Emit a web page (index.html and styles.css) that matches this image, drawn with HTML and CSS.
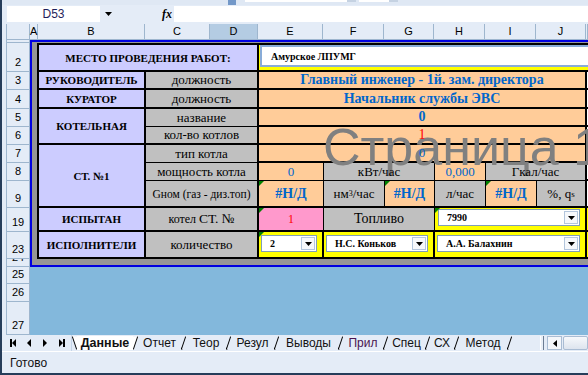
FILE: index.html
```html
<!DOCTYPE html>
<html lang="ru">
<head>
    <meta charset="utf-8">
    <title>Данные</title>
    <link rel="stylesheet" href="styles.css">
</head>
<body>
    <div class="window">
        <!-- Cut-off toolbar row -->
        <div class="ribbon-edge">
            <span class="rb-drop"></span>
            <span class="rb-field"></span>
            <span class="rb-btn"></span>
            <span class="rb-field rb-field-s"></span>
            <span class="rb-btn"></span>
        </div>

        <!-- Formula bar -->
        <div class="formula-bar">
            <div class="name-box">D53</div>
            <div class="name-drop">
                <svg width="7" height="4" viewBox="0 0 7 4"><path d="M0 0h7L3.5 4z" fill="#000"/></svg>
            </div>
            <div class="fx">fx</div>
            <div class="formula-input"></div>
        </div>

        <!-- Sheet -->
        <div class="sheet">
            <div class="col-heads">
                <div class="corner"></div>
                <div class="ch ch-a">A</div>
                <div class="ch ch-b">B</div>
                <div class="ch ch-c">C</div>
                <div class="ch ch-d sel">D</div>
                <div class="ch ch-e">E</div>
                <div class="ch ch-f">F</div>
                <div class="ch ch-g">G</div>
                <div class="ch ch-h">H</div>
                <div class="ch ch-i">I</div>
                <div class="ch ch-j">J</div>
                <div class="ch ch-k"></div>
            </div>

            <div class="sheet-body">
                <div class="row-heads">
                    <div class="rh rh-1"></div>
                    <div class="rh rh-2">2</div>
                    <div class="rh rh-3">3</div>
                    <div class="rh rh-4">4</div>
                    <div class="rh rh-5">5</div>
                    <div class="rh rh-6">6</div>
                    <div class="rh rh-7">7</div>
                    <div class="rh rh-8">8</div>
                    <div class="rh rh-9">9</div>
                    <div class="rh rh-19">19</div>
                    <div class="rh rh-23">23</div>
                    <div class="rh rh-24">24</div>
                    <div class="rh rh-25">25</div>
                    <div class="rh rh-26">26</div>
                    <div class="rh rh-27">27</div>
                </div>

                <div class="cells">
                    <div class="print-area">
                        <div class="data">
                            <!-- row 2 -->
                            <div class="c lav lab s2">МЕСТО ПРОВЕДЕНИЯ РАБОТ:</div>
                            <div class="c yel place s7"><div class="entry">Амурское ЛПУМГ</div></div>

                            <!-- row 3 -->
                            <div class="c lav lab">РУКОВОДИТЕЛЬ</div>
                            <div class="c gry">должность</div>
                            <div class="c org big s6"><span class="v">Главный инженер - 1й. зам. директора</span></div>
                            <div class="c k"></div>

                            <!-- row 4 -->
                            <div class="c lav lab">КУРАТОР</div>
                            <div class="c gry">должность</div>
                            <div class="c org big s6"><span class="v">Начальник службы ЭВС</span></div>
                            <div class="c k"></div>

                            <!-- rows 5-6 -->
                            <div class="c lav lab r2">КОТЕЛЬНАЯ</div>
                            <div class="c gry thin-b">название</div>
                            <div class="c org big s6"><span class="v">0</span></div>
                            <div class="c k"></div>
                            <div class="c gry">кол-во котлов</div>
                            <div class="c org red s6"><span class="v">1</span></div>
                            <div class="c k"></div>

                            <!-- rows 7-9 -->
                            <div class="c lav lab r3">СТ. №1</div>
                            <div class="c gry thin-b">тип котла</div>
                            <div class="c org num s6"><span class="v">0</span></div>
                            <div class="c k"></div>

                            <div class="c gry thin-b">мощность котла</div>
                            <div class="c org num thin"><span class="v">0</span></div>
                            <div class="c gry thin s2"><span class="v">кВт/час</span></div>
                            <div class="c org num thin"><span class="v">0,000</span></div>
                            <div class="c gry thin-b s2"><span class="v">Гкал/час</span></div>
                            <div class="c k"></div>

                            <div class="c gry sm">Gном (газ - диз.топ)</div>
                            <div class="c org hash thin-r tri">#Н/Д</div>
                            <div class="c gry thin-r">нм<sup>3</sup>/час</div>
                            <div class="c org hash thin-r tri">#Н/Д</div>
                            <div class="c gry thin-r">л/час</div>
                            <div class="c org hash thin-r tri">#Н/Д</div>
                            <div class="c gry">%, q<sub>s</sub></div>
                            <div class="c k"></div>

                            <!-- row 19 -->
                            <div class="c lav lab">ИСПЫТАН</div>
                            <div class="c gry st-cell">котел&nbsp;<span class="st">СТ. №</span></div>
                            <div class="c pink unit thin-r tri">1</div>
                            <div class="c gry fuel thin-r s2">Топливо</div>
                            <div class="c yel box box-19 s3 tri">
                                <div class="combo">
                                    <span class="combo-val">7990</span>
                                    <span class="drop"><svg width="7" height="4" viewBox="0 0 7 4"><path d="M0 0h7L3.5 4z" fill="#000"/></svg></span>
                                </div>
                            </div>
                            <div class="c k yel"></div>

                            <!-- row 23 -->
                            <div class="c lav lab">ИСПОЛНИТЕЛИ</div>
                            <div class="c gry">количество</div>
                            <div class="c yel box tri">
                                <div class="combo">
                                    <span class="combo-val">2</span>
                                    <span class="drop"><svg width="7" height="4" viewBox="0 0 7 4"><path d="M0 0h7L3.5 4z" fill="#000"/></svg></span>
                                </div>
                            </div>
                            <div class="c yel box s2">
                                <div class="combo">
                                    <span class="combo-val">Н.С. Коньков</span>
                                    <span class="drop"><svg width="7" height="4" viewBox="0 0 7 4"><path d="M0 0h7L3.5 4z" fill="#000"/></svg></span>
                                </div>
                            </div>
                            <div class="c yel box s3">
                                <div class="combo">
                                    <span class="combo-val">А.А. Балахнин</span>
                                    <span class="drop"><svg width="7" height="4" viewBox="0 0 7 4"><path d="M0 0h7L3.5 4z" fill="#000"/></svg></span>
                                </div>
                            </div>
                            <div class="c k yel"></div>
                        </div>
                    </div>

                    <!-- Page break preview label, drawn under cell values -->
                    <div class="watermark">Страница 1</div>
                </div>
            </div>
        </div>

        <!-- Sheet tabs -->
        <div class="tab-bar">
            <div class="tab-nav">
                <svg width="60" height="16" viewBox="0 0 60 16">
                    <rect x="1" y="4" width="2" height="8" fill="#000"/>
                    <path d="M3 8L7 4v8z" fill="#000"/>
                    <path d="M18 8l4-4v8z" fill="#000"/>
                    <path d="M34 4v8l4-4z" fill="#000"/>
                    <path d="M50 4v8l4-4z" fill="#000"/>
                    <rect x="54" y="4" width="2" height="8" fill="#000"/>
                </svg>
            </div>
            <svg class="edge" width="5" height="16" viewBox="0 0 5 16"><path d="M0 1.5H5V14.5z" fill="#fff"/><path d="M0.3 1.5L4.7 14.5" stroke="#000" fill="none"/></svg>
            <div class="tab active t-data">Данные</div>
            <svg class="edge" width="5" height="16" viewBox="0 0 5 16"><path d="M0 1.5H5L0 14.5z" fill="#fff"/><path d="M0.3 14.5L4.7 1.5" stroke="#000" fill="none"/></svg>
            <div class="tab t-otch">Отчет</div>
            <svg class="edge" width="5" height="16" viewBox="0 0 5 16"><path d="M0.3 14.5L4.7 1.5M0 12.5l1 2" stroke="#000" fill="none"/></svg>
            <div class="tab t-teor">Теор</div>
            <svg class="edge" width="5" height="16" viewBox="0 0 5 16"><path d="M0.3 14.5L4.7 1.5M0 12.5l1 2" stroke="#000" fill="none"/></svg>
            <div class="tab t-rez">Резул</div>
            <svg class="edge" width="5" height="16" viewBox="0 0 5 16"><path d="M0.3 14.5L4.7 1.5M0 12.5l1 2" stroke="#000" fill="none"/></svg>
            <div class="tab t-vyv">Выводы</div>
            <svg class="edge" width="5" height="16" viewBox="0 0 5 16"><path d="M0.3 14.5L4.7 1.5M0 12.5l1 2" stroke="#000" fill="none"/></svg>
            <div class="tab t-pril">Прил</div>
            <svg class="edge" width="5" height="16" viewBox="0 0 5 16"><path d="M0.3 14.5L4.7 1.5M0 12.5l1 2" stroke="#000" fill="none"/></svg>
            <div class="tab t-spec">Спец</div>
            <svg class="edge" width="5" height="16" viewBox="0 0 5 16"><path d="M0.3 14.5L4.7 1.5M0 12.5l1 2" stroke="#000" fill="none"/></svg>
            <div class="tab t-sx">СХ</div>
            <svg class="edge" width="5" height="16" viewBox="0 0 5 16"><path d="M0.3 14.5L4.7 1.5M0 12.5l1 2" stroke="#000" fill="none"/></svg>
            <div class="tab t-met">Метод</div>
            <svg class="edge" width="5" height="16" viewBox="0 0 5 16"><path d="M0.3 14.5L4.7 1.5M0 12.5l1 2" stroke="#000" fill="none"/></svg>

            <div class="hscroll">
                <div class="splitter"></div>
                <div class="scroll-btn">
                    <svg width="4" height="7" viewBox="0 0 4 7"><path d="M4 0v7L0 3.5z" fill="#000"/></svg>
                </div>
                <div class="scroll-thumb"></div>
            </div>
        </div>

        <!-- Status bar -->
        <div class="status-bar">Готово</div>
    </div>
</body>
</html>
```

FILE: styles.css
```css
* {
    box-sizing: border-box;
}

body {
    margin: 0;
    background-color: #e4ecf7;
    font-family: "Liberation Sans", Arial, sans-serif;
    font-size: 12px;
    color: #000;
    overflow: hidden;
}

.window {
    width: 588px;
    height: 375px;
    display: flex;
    flex-direction: column;
    border-left: 2px solid #263d5a;
    border-bottom: 2px solid #263d5a;
    background-color: #e4ecf7;
}

/* Toolbar remnants */
.ribbon-edge {
    height: 5px;
    flex: none;
    display: flex;
    align-items: flex-start;
    background-color: #dfe8f4;
}

.rb-drop {
    margin-left: 226px;
    width: 8px;
    height: 5px;
    background-color: #7398c8;
}

.rb-field {
    margin-left: 9px;
    width: 102px;
    height: 2px;
    background-color: #fff;
}

.rb-field-s {
    margin-left: 3px;
    width: 30px;
}

.rb-btn {
    width: 9px;
    height: 2px;
    background-color: #c5d2e2;
}

/* Formula bar */
.formula-bar {
    height: 19px;
    flex: none;
    display: flex;
    align-items: flex-start;
    padding-top: 1px;
}

.name-box {
    margin-left: 5px;
    width: 93px;
    height: 16px;
    background-color: #fff;
    text-align: center;
    line-height: 16px;
    font-size: 12px;
    color: #1f1f5c;
}

.name-drop {
    width: 16px;
    height: 16px;
    display: flex;
    align-items: center;
    justify-content: center;
}

.fx {
    margin-left: 46px;
    width: 12px;
    height: 16px;
    font: italic bold 12px "Liberation Serif", serif;
    line-height: 16px;
}

.formula-input {
    flex: 1;
    height: 16px;
    background-color: #fff;
}

/* Grid headers */
.sheet {
    flex: none;
    margin-left: 4px;
}

.col-heads {
    display: flex;
    height: 16px;
}

.corner {
    flex: none;
    width: 24px;
    border: 1px solid #9eb6ce;
    border-top: none;
    background-color: #e4ecf7;
}

.ch {
    flex: none;
    border-right: 1px solid #9eb6ce;
    border-bottom: 1px solid #9eb6ce;
    background-color: #e4ecf7;
    text-align: center;
    font-size: 11px;
    line-height: 15px;
}

.ch.sel {
    background-color: #b4cce3;
}

.ch-a { width: 8px; }
.ch-b { width: 107px; }
.ch-c { width: 65px; }
.ch-d { width: 48px; }
.ch-e { width: 65px; }
.ch-f { width: 61px; }
.ch-g { width: 50px; }
.ch-h { width: 51px; }
.ch-i { width: 51px; }
.ch-j { width: 50px; }
.ch-k { flex: 1; }

.sheet-body {
    display: flex;
    height: 295px;
}

.row-heads {
    flex: none;
    width: 24px;
    border-left: 1px solid #9eb6ce;
    border-right: 1px solid #9eb6ce;
    background-color: #e4ecf7;
}

.rh {
    display: flex;
    align-items: flex-end;
    justify-content: center;
    border-bottom: 1px solid #9eb6ce;
    padding-bottom: 2px;
    font-size: 11px;
    line-height: 13px;
    overflow: hidden;
}

.rh-1 { height: 3px; }
.rh-2 { height: 29px; }
.rh-3 { height: 18px; }
.rh-4 { height: 19px; }
.rh-5 { height: 18px; }
.rh-6 { height: 18px; }
.rh-7 { height: 18px; }
.rh-8 { height: 18px; }
.rh-9 { height: 27px; }
.rh-19 { height: 24px; }
.rh-23 { height: 27px; }
.rh-24 { height: 8px; }
.rh-25 { height: 17px; }
.rh-26 { height: 18px; }
.rh-27 { height: 33px; }

/* Page break preview */
.cells {
    flex: 1;
    position: relative;
    overflow: hidden;
    background-color: #83b8dc;
}

.print-area {
    width: max-content;
    border: 2px solid #0000e0;
    border-right: none;
    background-color: #969696;
    padding: 1px 0 6px 5px;
}

.data {
    display: grid;
    grid-template-columns: 107px 113px 65px 61px 50px 51px 51px 50px 30px;
    grid-template-rows: 27px 18px 19px 18px 18px 18px 18px 27px 24px 27px;
    border-top: 2px solid #000;
    border-left: 2px solid #000;
}

.c {
    display: flex;
    align-items: center;
    justify-content: center;
    border-right: 2px solid #000;
    border-bottom: 2px solid #000;
    font-family: "Liberation Serif", "Times New Roman", serif;
    font-size: 13px;
    white-space: nowrap;
    overflow: hidden;
}

/* values stay readable above the page label */
.v {
    position: relative;
    z-index: 2;
}

.s2 { grid-column: span 2; }
.s3 { grid-column: span 3; }
.s6 { grid-column: span 6; }
.s7 { grid-column: span 7; }
.r2 { grid-row: span 2; }
.r3 { grid-row: span 3; }

.thin-b { border-bottom-width: 1px; }
.thin-r { border-right-width: 1px; }
.thin { border-bottom-width: 1px; border-right-width: 1px; }

.lav { background-color: #ccccff; }
.gry { background-color: #c0c0c0; }
.org { background-color: #ffcc99; }
.pink { background-color: #ff99cc; }
.yel { background-color: #ffff00; }

.k {
    background-color: #fff;
    border-right: none;
}

.k.yel {
    background-color: #ffff00;
}

.lab {
    font-weight: bold;
    font-size: 11px;
}

.big {
    color: #0066cc;
    font-weight: bold;
    font-size: 14px;
}

.num {
    color: #0066cc;
}

.hash {
    color: #0066cc;
    font-weight: bold;
    font-size: 14px;
}

.red {
    color: #ff0000;
    font-size: 14px;
}

.unit {
    color: #ff0000;
    font-size: 12px;
}

.sm {
    font-size: 11.5px;
}

.st-cell {
    font-size: 12px;
}

.st {
    font-size: 13.5px;
}

.fuel {
    font-size: 14px;
}

sup {
    font-size: 8px;
    vertical-align: 5px;
}

sub {
    font-size: 9px;
    vertical-align: -1px;
}

/* green error marker */
.tri {
    position: relative;
}

.tri::before {
    content: "";
    position: absolute;
    left: 0;
    top: 0;
    border-top: 5px solid #008000;
    border-right: 5px solid transparent;
}

/* Text box and combo boxes */
.place {
    align-items: stretch;
    padding: 0 0 3px 1px;
}

.entry {
    flex: 1;
    display: flex;
    align-items: center;
    padding-left: 9px;
    border: 2px solid #89acd8;
    background-color: #fff;
    font-size: 10px;
    font-weight: bold;
}

.box {
    align-items: flex-start;
    justify-content: stretch;
    padding: 3px 5px 0 2px;
}

.box-19 {
    padding: 1px 5px 0 3px;
}

.combo {
    flex: 1;
    height: 17px;
    display: flex;
    align-items: stretch;
    border: 1px solid #7f9db9;
    background-color: #fff;
}

.combo-val {
    flex: 1;
    display: flex;
    align-items: center;
    padding-left: 8px;
    font-size: 10px;
    font-weight: bold;
}

.drop {
    width: 14px;
    margin: 1px;
    display: flex;
    align-items: center;
    justify-content: center;
    border: 1px solid #b3c6dd;
    background-color: #f6f8fb;
}

.watermark {
    position: absolute;
    z-index: 1;
    left: 293px;
    top: 81px;
    font-family: "Liberation Sans", Arial, sans-serif;
    font-size: 52px;
    line-height: 1;
    color: #808080;
    white-space: nowrap;
    pointer-events: none;
}

/* Sheet tabs */
.tab-bar {
    height: 16px;
    flex: none;
    display: flex;
    align-items: stretch;
    background-color: #e4ecf7;
}

.tab-nav {
    width: 70px;
    flex: none;
    padding-left: 7px;
    border-right: 1px solid #c5d5e8;
}

.tab-nav svg {
    display: block;
}

.edge {
    flex: none;
    display: block;
}

.tab {
    flex: none;
    display: flex;
    align-items: center;
    justify-content: center;
    font-size: 12px;
    color: #111;
}

.tab.active {
    background-color: #fff;
    margin: 1px 0;
    font-weight: bold;
    font-size: 12.5px;
}

.t-data { width: 56px; }
.t-otch { width: 43px; }
.t-teor { width: 40px; }
.t-rez { width: 43px; }
.t-vyv { width: 59px; }
.t-pril { width: 40px; color: #4a1450; }
.t-spec { width: 37px; }
.t-sx { width: 24px; }
.t-met { width: 48px; }

.hscroll {
    margin-left: auto;
    width: 48px;
    display: flex;
    align-items: center;
}

.splitter {
    width: 4px;
    height: 14px;
    margin-right: 3px;
    border-left: 1px solid #fff;
    border-right: 1px solid #6c7d93;
    background-color: #e9eff7;
}

.scroll-btn {
    width: 15px;
    height: 14px;
    display: flex;
    align-items: center;
    justify-content: center;
    border: 1px solid #a9bcd3;
    background-color: #f3f6fa;
}

.scroll-thumb {
    flex: 1;
    height: 14px;
    margin-left: 1px;
    border: 1px solid #a9bcd3;
    border-radius: 2px;
    background: linear-gradient(#f6f8fb, #dde4ee);
}

/* Status bar */
.status-bar {
    flex: 1;
    display: flex;
    align-items: center;
    padding-left: 8px;
    border-top: 1px solid #fff;
    font-size: 12px;
    color: #111;
}
```
